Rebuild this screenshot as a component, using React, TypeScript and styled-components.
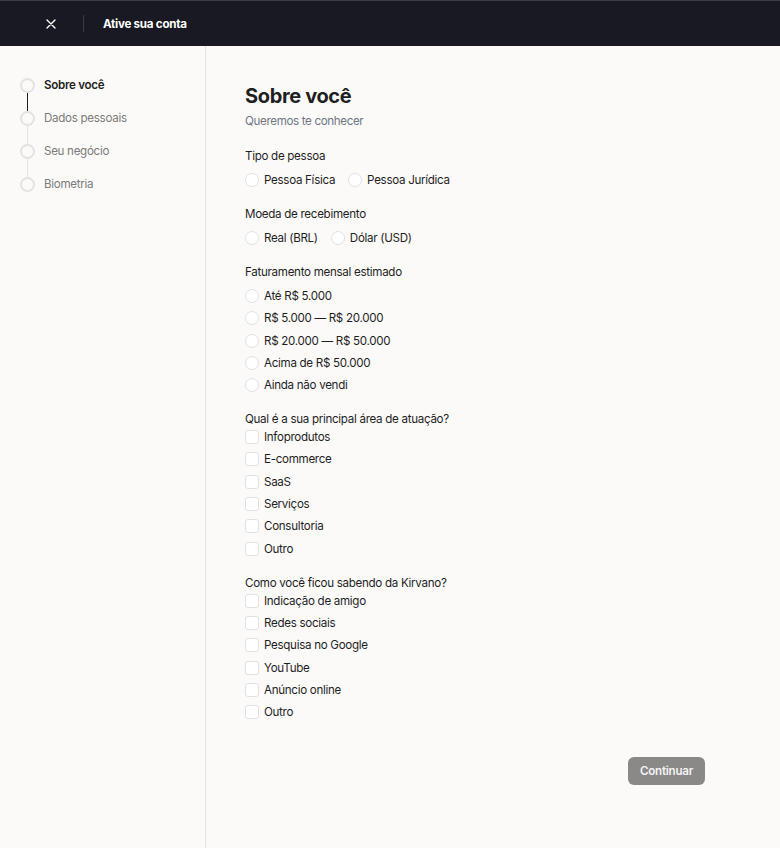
import React, { useState } from "react";
import styled, { createGlobalStyle } from "styled-components";

const GlobalStyle = createGlobalStyle`
  html, body, #root { margin: 0; padding: 0; height: 100%; }
  body {
    font-family: Inter, "Noto Sans", Arial, sans-serif;
    background: #fbfaf9;
    color: #1f1f1f;
    -webkit-font-smoothing: antialiased;
  }
  * { box-sizing: border-box; }
`;

const Page = styled.div`
  display: flex;
  flex-direction: column;
  min-height: 100vh;
`;

const TopBar = styled.header`
  height: 46px;
  flex: none;
  display: flex;
  align-items: center;
  padding-left: 39px;
  background: #191923;
  border-top: 1px solid #3c3c44;
`;

const CloseButton = styled.button`
  width: 24px;
  height: 24px;
  display: flex;
  align-items: center;
  justify-content: center;
  background: none;
  border: 0;
  padding: 0;
  color: #ffffff;
  cursor: pointer;
`;

const BarDivider = styled.span`
  width: 1px;
  height: 17px;
  background: #3a3a44;
  margin: 0 19px 0 20px;
`;

const BarTitle = styled.h1`
  margin: 0;
  font-size: 11.6px;
  font-weight: 700;
  color: #ffffff;
  letter-spacing: -0.25px;
`;

const Body = styled.div`
  flex: 1;
  display: flex;
`;

const Sidebar = styled.nav`
  width: 206px;
  flex: none;
  border-right: 1px solid #e6e4e2;
  padding: 32px 0 0 20px;
  display: flex;
  flex-direction: column;
`;

const Step = styled.div`
  display: flex;
  gap: 9px;
`;

const StepTrack = styled.div`
  display: flex;
  flex-direction: column;
  align-items: center;
  width: 15px;
`;

const StepDot = styled.span`
  width: 15px;
  height: 15px;
  border-radius: 50%;
  border: 2px solid #e4e2e0;
  background: #fbfaf9;
  flex: none;
`;

const StepLine = styled.span<{ $done: boolean }>`
  width: 1.5px;
  height: 18px;
  background: ${(p) => (p.$done ? "#1f1f1f" : "#e4e2e0")};
`;

const StepLabel = styled.span<{ $active: boolean }>`
  font-size: 11.6px;
  line-height: 15px;
  letter-spacing: -0.3px;
  font-weight: ${(p) => (p.$active ? 600 : 400)};
  color: ${(p) => (p.$active ? "#1f1f1f" : "#7b7b7b")};
`;

const Main = styled.main`
  flex: 1;
  padding: 38px 0 40px 39px;
`;

const Content = styled.div`
  width: 460px;
  display: flex;
  flex-direction: column;
`;

const Title = styled.h2`
  margin: 0;
  font-size: 20px;
  line-height: 24px;
  font-weight: 700;
  letter-spacing: -0.35px;
`;

const Subtitle = styled.p`
  margin: 5px 0 0;
  font-size: 11.6px;
  line-height: 16px;
  letter-spacing: -0.35px;
  color: #6f7682;
`;

const Form = styled.form`
  margin-top: 19px;
  display: flex;
  flex-direction: column;
  gap: 18px;
`;

const Group = styled.fieldset<{ $tight?: boolean }>`
  border: 0;
  margin: 0;
  padding: 0;
  display: flex;
  flex-direction: column;
  gap: ${(p) => (p.$tight ? "2px" : "8px")};
`;

const GroupLabel = styled.legend`
  padding: 0;
  font-size: 11.6px;
  line-height: 16px;
  letter-spacing: -0.3px;
  color: #1f1f1f;
  float: left;
  width: 100%;
`;

const InlineOptions = styled.div`
  display: flex;
  gap: 13px;
`;

const StackOptions = styled.div`
  display: flex;
  flex-direction: column;
  gap: 6.3px;
`;

const Option = styled.label`
  display: flex;
  align-items: center;
  gap: 5px;
  font-size: 11.6px;
  line-height: 16px;
  letter-spacing: -0.3px;
  color: #1f1f1f;
  cursor: pointer;
`;

const Mark = styled.span<{ $round: boolean; $on: boolean }>`
  width: 14px;
  height: 14px;
  flex: none;
  border: 1px solid #e3e1df;
  border-radius: ${(p) => (p.$round ? "50%" : "3px")};
  background: #ffffff;
  display: flex;
  align-items: center;
  justify-content: center;
  &::after {
    content: "";
    display: ${(p) => (p.$on ? "block" : "none")};
    width: 6px;
    height: 6px;
    border-radius: ${(p) => (p.$round ? "50%" : "1px")};
    background: #1f1f1f;
  }
`;

const HiddenInput = styled.input`
  position: absolute;
  opacity: 0;
  width: 0;
  height: 0;
`;

const Actions = styled.div`
  margin-top: 37px;
  display: flex;
  justify-content: flex-end;
`;

const PrimaryButton = styled.button`
  height: 28px;
  padding: 0 12px;
  border: 0;
  border-radius: 6px;
  background: #8a8987;
  color: #f4f4f4;
  font-family: inherit;
  font-size: 11.6px;
  letter-spacing: -0.25px;
  font-weight: 600;
  cursor: not-allowed;
`;

const steps = ["Sobre você", "Dados pessoais", "Seu negócio", "Biometria"];

type Choice = { name: string; items: string[]; multi: boolean; inline?: boolean; label: string };

const groups: Choice[] = [
  { name: "tipo", label: "Tipo de pessoa", items: ["Pessoa Física", "Pessoa Jurídica"], multi: false, inline: true },
  { name: "moeda", label: "Moeda de recebimento", items: ["Real (BRL)", "Dólar (USD)"], multi: false, inline: true },
  {
    name: "faturamento",
    label: "Faturamento mensal estimado",
    items: ["Até R$ 5.000", "R$ 5.000 — R$ 20.000", "R$ 20.000 — R$ 50.000", "Acima de R$ 50.000", "Ainda não vendi"],
    multi: false,
  },
  {
    name: "area",
    label: "Qual é a sua principal área de atuação?",
    items: ["Infoprodutos", "E-commerce", "SaaS", "Serviços", "Consultoria", "Outro"],
    multi: true,
  },
  {
    name: "origem",
    label: "Como você ficou sabendo da Kirvano?",
    items: ["Indicação de amigo", "Redes sociais", "Pesquisa no Google", "YouTube", "Anúncio online", "Outro"],
    multi: true,
  },
];

function CloseIcon() {
  return (
    <svg width="10" height="10" viewBox="0 0 10 10" fill="none" stroke="currentColor" strokeWidth="1.4" strokeLinecap="round">
      <path d="M1 1l8 8M9 1L1 9" />
    </svg>
  );
}

export default function App() {
  const [values, setValues] = useState<Record<string, string[]>>({});

  const toggle = (g: Choice, item: string) => {
    setValues((prev) => {
      const cur = prev[g.name] ?? [];
      if (!g.multi) return { ...prev, [g.name]: [item] };
      return {
        ...prev,
        [g.name]: cur.includes(item) ? cur.filter((v) => v !== item) : [...cur, item],
      };
    });
  };

  return (
    <>
      <GlobalStyle />
      <Page>
        <TopBar>
          <CloseButton aria-label="Fechar">
            <CloseIcon />
          </CloseButton>
          <BarDivider />
          <BarTitle>Ative sua conta</BarTitle>
        </TopBar>
        <Body>
          <Sidebar>
            {steps.map((s, i) => (
              <Step key={s}>
                <StepTrack>
                  <StepDot />
                  {i < steps.length - 1 && <StepLine $done={i === 0} />}
                </StepTrack>
                <StepLabel $active={i === 0}>{s}</StepLabel>
              </Step>
            ))}
          </Sidebar>
          <Main>
            <Content>
              <Title>Sobre você</Title>
              <Subtitle>Queremos te conhecer</Subtitle>
              <Form onSubmit={(e) => e.preventDefault()}>
                {groups.map((g) => {
                  const List = g.inline ? InlineOptions : StackOptions;
                  return (
                    <Group key={g.name} $tight={g.multi}>
                      <GroupLabel>{g.label}</GroupLabel>
                      <List>
                        {g.items.map((item) => {
                          const on = (values[g.name] ?? []).includes(item);
                          return (
                            <Option key={item}>
                              <HiddenInput
                                type={g.multi ? "checkbox" : "radio"}
                                name={g.name}
                                checked={on}
                                onChange={() => toggle(g, item)}
                              />
                              <Mark $round={!g.multi} $on={on} />
                              {item}
                            </Option>
                          );
                        })}
                      </List>
                    </Group>
                  );
                })}
              </Form>
              <Actions>
                <PrimaryButton type="button">Continuar</PrimaryButton>
              </Actions>
            </Content>
          </Main>
        </Body>
      </Page>
    </>
  );
}
